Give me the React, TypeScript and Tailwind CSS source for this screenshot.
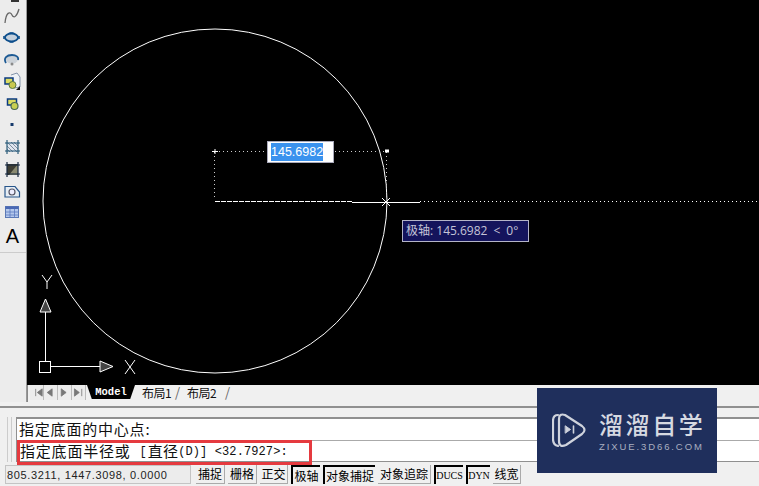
import React from 'react';

const cjk = '"Noto Sans CJK SC", "Liberation Sans", sans-serif';
const mono = '"Liberation Mono", monospace';

// left draw toolbar, icons drawn by hand
function ToolIcons() {
  return (
    <svg width="26" height="226" viewBox="0 0 26 226" className="block">
      <rect x="11" y="0" width="8" height="2" fill="#333" />
      {/* spline */}
      <path d="M5 23 C6 12 10 11 12 15 C14 19 17 16 19 9" fill="none" stroke="#666" strokeWidth="1.3" />
      {/* ellipse */}
      <ellipse cx="11.5" cy="37.5" rx="6.5" ry="4" fill="#c4d0dc" stroke="#0e4f8c" strokeWidth="1.8" />
      <path d="M9.5 33 H13.5 M9.5 42 H13.5 M4 36 V39 M19 36 V39" stroke="#0e4f8c" strokeWidth="1.6" />
      {/* ellipse arc */}
      <ellipse cx="12" cy="59.5" rx="6" ry="4" fill="#ccd2d8" />
      <path d="M6 63 C3 58 7 55 12 55 C16 55 19 57 18 60" fill="none" stroke="#1c5a94" strokeWidth="1.8" />
      <circle cx="12" cy="64" r="1.5" fill="#8a8a8a" />
      {/* insert block */}
      <path d="M11 75 L17 73 L20 77 L20 87 L14 88" fill="#eef2f6" stroke="#8494aa" strokeWidth="1" />
      <rect x="5" y="78" width="8" height="6" fill="#dcdc60" stroke="#0a3a80" strokeWidth="1.5" />
      <circle cx="12.5" cy="85" r="3.5" fill="#c8c850" stroke="#5a7a40" strokeWidth="1" />
      <path d="M16 90 L20 90 L20 86 Z" fill="#111" />
      {/* make block */}
      <rect x="7.5" y="99" width="9" height="6" fill="#dcdc60" stroke="#0a3a80" strokeWidth="1.5" />
      <circle cx="14.5" cy="106" r="3.5" fill="#c8d050" stroke="#4a6a50" strokeWidth="1.2" />
      {/* point */}
      <rect x="10.5" y="123" width="3" height="3" fill="#163a6c" />
      {/* hatch */}
      <rect x="7" y="142" width="11" height="10" fill="#dfe6ee" />
      <path d="M8 143 L17 152 M11 142 L18 149 M14 142 L18 146 M7 146 L13 152 M7 149 L10 152" stroke="#7e8ea2" strokeWidth="1" />
      <path d="M5 143 H20 M5 151 H20 M7 140 V154 M18 140 V154" stroke="#1c5070" strokeWidth="1.1" />
      {/* gradient */}
      <rect x="7" y="164" width="11" height="11" fill="#3e3e34" />
      <path d="M18 164 V175 H9 Z" fill="#8a8a70" />
      <path d="M5 165 H20 M5 174 H20 M7 162 V177 M18 162 V177" stroke="#14263c" strokeWidth="1.2" />
      {/* region */}
      <path d="M5 186.5 H15 L19.5 192 V197 H5 Z" fill="#e6edf4" stroke="#27558a" strokeWidth="1.2" />
      <circle cx="12" cy="192" r="3" fill="#eef" stroke="#556" strokeWidth="1.2" />
      {/* table */}
      <rect x="5.5" y="206.5" width="13" height="11" fill="#b4c8ec" stroke="#5a78b4" strokeWidth="1" />
      <rect x="5.5" y="206.5" width="13" height="2.5" fill="#4a68b4" />
      <path d="M10 209 V218 M14.5 209 V218 M6 212 H19 M6 215 H19" stroke="#5a78c0" strokeWidth="0.8" />
    </svg>
  );
}

function Drawing() {
  return (
    <svg width="732" height="385" viewBox="27 0 732 385" className="absolute inset-0">
      <circle cx="215" cy="201" r="172" fill="none" stroke="#fff" strokeWidth="1" />
      {/* rubber band */}
      <path d="M215 201.5 H352" stroke="#fff" strokeWidth="1" strokeDasharray="5 1" />
      <path d="M420 201.5 H759" stroke="#fff" strokeWidth="1" strokeDasharray="1 3" />
      <path d="M352 202.5 H420" stroke="#fff" strokeWidth="1" />
      {/* dimension dots */}
      <path d="M215 151.5 H386 M214.5 152 V200 M386.5 152 V200" stroke="#ccc" strokeWidth="1" strokeDasharray="1 3" />
      <path d="M212 151.5 H218 M215 149 V154" stroke="#fff" strokeWidth="1" />
      <rect x="385" y="149.5" width="4" height="3" fill="#fff" />
      {/* cursor */}
      <path d="M382 198 L390 206 M390 198 L382 206" stroke="#fff" strokeWidth="1" />
      {/* ucs icon */}
      <path d="M45.5 312 V361" stroke="#fff" strokeWidth="1" />
      <path d="M45.5 299 L40 312 H51 Z" fill="#444" stroke="#fff" strokeWidth="1" />
      <rect x="39.5" y="361.5" width="11" height="11" fill="none" stroke="#fff" strokeWidth="1" />
      <path d="M51 366.5 H100" stroke="#fff" strokeWidth="1" />
      <path d="M113 366.5 L100 361 V372 Z" fill="#444" stroke="#fff" strokeWidth="1" />
      <path d="M42 275 L47 282 L52 275 M47 282 V289" fill="none" stroke="#fff" strokeWidth="1" />
      <path d="M125 360 L135 374 M135 360 L125 374" stroke="#fff" strokeWidth="1" />
    </svg>
  );
}

function TabNav() {
  return (
    <div className="flex items-center h-[15px] ml-[2px]">
      {['M7 2 V11 M15 2 L9 6.5 L15 11 Z', 'M10 2 L4 6.5 L10 11 Z', 'M4 2 L10 6.5 L4 11 Z', 'M3 2 L9 6.5 L3 11 Z M12 2 V11'].map((d, i) => (
        <div key={i} className="w-[14px] h-[15px] border-r border-[#bbb] bg-[#ececec] flex items-center justify-center">
          <svg width="14" height="13" viewBox="0 0 16 13">
            <path d={d} fill="#777" stroke="#777" strokeWidth="1" />
          </svg>
        </div>
      ))}
    </div>
  );
}

function Pane({ label, w, active, small }: { label: string; w: number; active?: boolean; small?: boolean }) {
  return (
    <div
      style={{ width: w, fontFamily: small ? '"Liberation Serif", serif' : cjk }}
      className={
        'h-[19px] shrink-0 flex items-center justify-center leading-none whitespace-nowrap text-black ' +
        (small ? 'text-[10px] ' : 'text-[12px] ') +
        (active ? 'border-l-2 border-t-2 border-black' : 'border-r border-b border-[#aaa]')
      }
    >
      {label}
    </div>
  );
}

export default function App() {
  return (
    <div className="relative w-[759px] h-[486px] overflow-hidden bg-[#f0f0f0]" style={{ fontFamily: cjk }}>
      {/* workspace */}
      <div className="flex h-[402px]">
        <div className="w-[27px] shrink-0 border-r border-[#999] bg-[#ececec] flex flex-col">
          <ToolIcons />
          <span className="block w-[25px] text-center text-[20px] leading-[20px] text-black" style={{ fontFamily: '"Liberation Sans", sans-serif' }}>A</span>
          <div className="mt-[6px] h-px bg-[#ccc]" />
        </div>
        <div className="flex-1 flex flex-col">
          <div className="relative h-[385px] bg-black">
            <Drawing />
            <div className="absolute left-[240px] top-[141px] w-[67px] h-[22px] bg-white border border-[#aab] flex items-center pl-[3px]">
              <span className="bg-[#3a92ee] text-white text-[12.5px] leading-[18px]" style={{ fontFamily: '"Liberation Sans", sans-serif' }}>145.6982</span>
            </div>
            <div className="absolute left-[375px] top-[220px] w-[127px] h-[22px] bg-[#14145c] border border-[#b4b4c8] flex items-center pl-[3px] text-[12px] text-[#c4c4d8] whitespace-nowrap" style={{ fontFamily: '"Open Sans", "Noto Sans CJK SC", sans-serif' }}>
              极轴: 145.6982
              <span className="ml-[6px]">&lt;</span>
              <span className="ml-[6px]">0°</span>
            </div>
          </div>
          <div className="flex items-start h-[17px] border-l border-[#888] bg-[#f0f0f0]">
            <TabNav />
            <div className="ml-px h-[14px] w-[48px] shrink-0 bg-black text-white text-[10.5px] leading-[14px] text-center font-bold" style={{ fontFamily: mono, clipPath: 'polygon(0 0, 100% 0, 90% 100%, 10% 100%)' }}>Model</div>
            <span className="ml-[7px] w-[33px] shrink-0 text-[12px] leading-[15px] text-[#111] tracking-[-0.5px]">布局1</span>
            <span className="w-[12px] shrink-0 text-[13px] leading-[14px] text-[#666]">/</span>
            <span className="w-[33px] shrink-0 text-[12px] leading-[15px] text-[#111] tracking-[-0.5px]">布局2</span>
            <span className="ml-[5px] text-[13px] leading-[14px] text-[#666]">/</span>
          </div>
        </div>
      </div>
      {/* command window */}
      <div className="mt-[4px] border-t-2 border-[#909090] h-[11px]" />
      <div className="flex h-[45px]">
        <div className="w-[16px] shrink-0 flex justify-center">
          <div className="w-[5px] h-full border-x border-[#ccc] ml-[3px]" />
        </div>
        <div className="flex-1 border-t-2 border-l border-b border-[#909090] bg-white text-[15px] text-[#111]">
          <div className="h-[22px] border-b border-[#aaa] pl-[2px] leading-[19px] tracking-[0.8px]">指定底面的中心点:</div>
          <div className="h-[21px] pl-[3px] flex items-center whitespace-nowrap">
            <span className="tracking-[0.8px]">指定底面半径或</span>
            <span className="ml-[9px] mr-[1px] text-[12px]" style={{ fontFamily: mono }}>[</span>
            <span className="tracking-[0.2px]">直径</span>
            <span className="text-[12px] tracking-[0.1px]" style={{ fontFamily: mono }}>(D)] &lt;32.7927&gt;:</span>
          </div>
        </div>
      </div>
      {/* status bar */}
      <div className="flex items-center h-[21px] mt-[2px] pl-[5px]">
        <div className="w-[186px] h-[19px] shrink-0 border border-[#c4c4c4] bg-[#ececec] pl-px text-[11px] leading-[18px] text-[#222] tracking-[0.65px]" style={{ fontFamily: '"Liberation Sans", sans-serif' }}>
          805.3211, 1447.3098, 0.0000
        </div>
        <div className="flex ml-[5px] gap-[3px]">
          <Pane label="捕捉" w={29} />
          <Pane label="栅格" w={29} />
          <Pane label="正交" w={28} />
          <Pane label="极轴" w={29} active />
          <Pane label="对象捕捉" w={52} active />
          <Pane label="对象追踪" w={53} />
          <Pane label="DUCS" w={29} active small />
          <Pane label="DYN" w={24} active small />
          <Pane label="线宽" w={28} />
        </div>
      </div>
      {/* annotation */}
      <div className="absolute left-[17px] top-[440px] w-[295px] h-[25px] border-[3px] border-[#e53a3f]" />
      {/* watermark */}
      <div className="absolute left-[537px] top-[388px] w-[180px] h-[85px] bg-[#1f2f5c] flex items-center pl-[15px]">
        <svg width="34" height="35" viewBox="0 0 34 35" fill="none" stroke="#cfd3dc" strokeWidth="2.2" strokeLinejoin="round" strokeLinecap="round">
          <path d="M6 2 Q1 2 1 8 V26 Q1 32 6 33" />
          <path d="M7 6 Q7 0 13 2 L30 13 Q35 17 30 21 L14 32 Q7 35 7 28 Z" />
          <path d="M13.5 13 L18.5 16.5 L13.5 20 Z" fill="#cfd3dc" strokeWidth="1" />
          <path d="M21.5 13 V20" strokeWidth="1.6" />
        </svg>
        <div className="ml-[13px] flex flex-col gap-[2px] text-[#d6d9e1]">
          <span className="text-[24px] leading-[29px] tracking-[2.6px] whitespace-nowrap font-medium">溜溜自学</span>
          <span className="text-[9.5px] leading-[13px] tracking-[1.9px] text-[#aab0c0] whitespace-nowrap" style={{ fontFamily: '"Liberation Sans", sans-serif' }}>ZIXUE.3D66.COM</span>
        </div>
      </div>
    </div>
  );
}
